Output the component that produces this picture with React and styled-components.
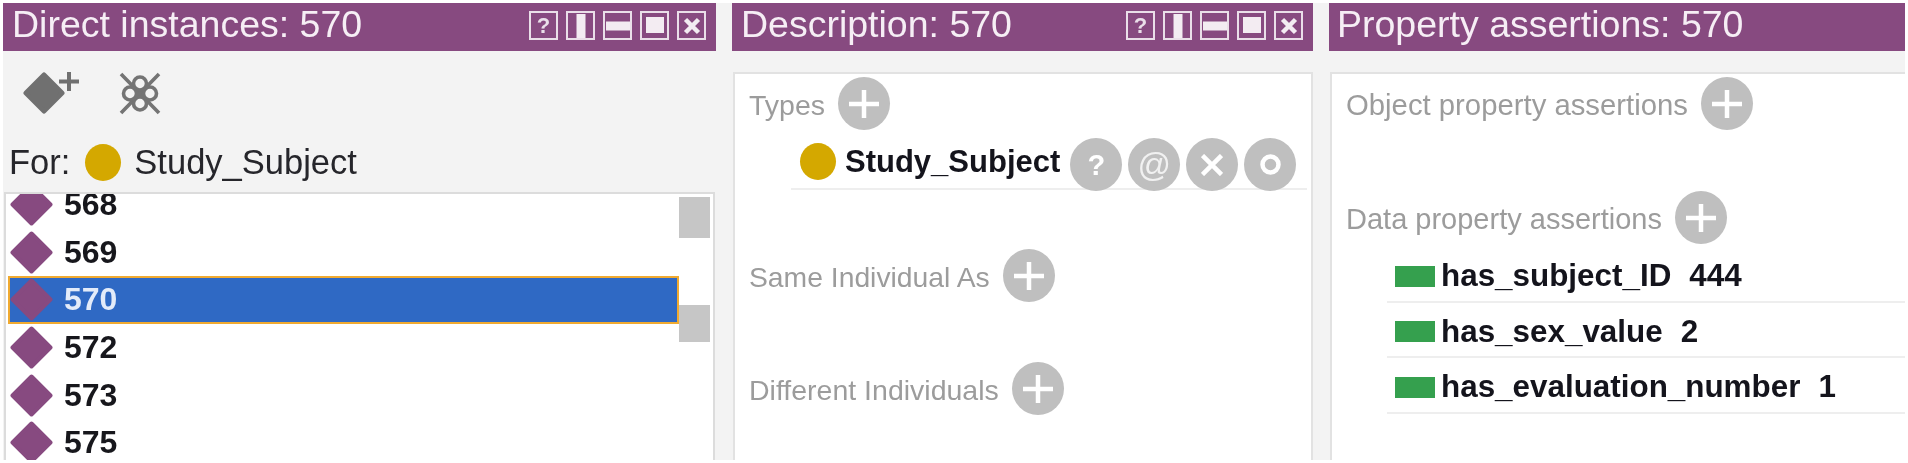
import React from "react";
import styled, { createGlobalStyle } from "styled-components";

const Global = createGlobalStyle`
  html, body { margin: 0; padding: 0; background: #fff; }
  #root { width: 1908px; height: 463px; overflow: hidden; }
`;

const Page = styled.div`
  box-sizing: border-box;
  width: 1908px;
  height: 463px;
  padding: 3px;
  background: #fff;
  font-family: "Liberation Sans", Arial, sans-serif;
  filter: blur(0.65px);
`;
const Frame = styled.div`
  display: flex;
  height: 457px;
  gap: 16px;
  background: #f3f3f3;
  overflow: hidden;
`;
const Panel = styled.section`
  display: flex;
  flex-direction: column;
  flex: 0 0 ${(p) => p.$w}px;
  min-width: 0;
`;
const Header = styled.header`
  display: flex;
  align-items: center;
  justify-content: space-between;
  box-sizing: border-box;
  flex: 0 0 48px;
  padding: 0 10px 0 ${(p) => p.$left}px;
  background: #874a80;
  color: #f6eef5;
`;
const Title = styled.h2`
  margin: 0 0 6px;
  font-size: 37.5px;
  font-weight: 400;
  line-height: 42px;
  white-space: nowrap;
`;
const WinButtons = styled.div`
  display: flex;
  gap: 8px;
  margin-bottom: 3px;
`;
const WinButton = styled.div`
  display: flex;
  align-items: center;
  justify-content: center;
  box-sizing: border-box;
  width: 29px;
  height: 29px;
  border: 2.5px solid #eadfe9;
  font-size: 22px;
  font-weight: 700;
  line-height: 1;
  color: #eadfe9;
`;
const Toolbar = styled.div`
  display: flex;
  align-items: flex-start;
  gap: 38px;
  box-sizing: border-box;
  height: 85px;
  padding: 21px 0 0 18px;
`;
const ForRow = styled.div`
  display: flex;
  align-items: center;
  box-sizing: border-box;
  height: 56px;
  padding: 0 0 4px 6px;
  font-size: 34.5px;
  color: #26262b;
`;
const ClassDot = styled.span`
  flex: none;
  width: 36px;
  height: 37px;
  margin: ${(p) => p.$margin};
  border-radius: 50%;
  background: #d4a800;
`;
const ListBox = styled.div`
  display: flex;
  flex: 1;
  min-height: 0;
  margin-left: 1px;
  margin-right: 1px;
  border: 2px solid #dcdcdc;
  border-bottom: 0;
  background: #fff;
  overflow: hidden;
`;
const Rows = styled.div`
  flex: 0 0 673px;
  margin-top: -13.5px;
`;
const IndividualRow = styled.div`
  display: flex;
  align-items: center;
  box-sizing: border-box;
  height: 47.7px;
  margin-left: 2px;
  padding-left: 2px;
  gap: 11px;
  font-size: 32px;
  font-weight: 700;
  color: ${(p) => (p.$selected ? "#e3ebf9" : "#17171c")};
  background: ${(p) => (p.$selected ? "#2f69c4" : "transparent")};
  outline: ${(p) => (p.$selected ? "2px solid #f0aa30" : "none")};
  outline-offset: -2px;
`;
const ScrollTrack = styled.div`
  display: flex;
  flex-direction: column;
  flex: 0 0 31px;
  padding-top: 3px;
`;
const Thumb = styled.div`
  flex: none;
  height: ${(p) => p.$h}px;
  margin-bottom: ${(p) => p.$after}px;
  background: #c6c6c6;
`;
const Card = styled.div`
  flex: 1;
  min-height: 0;
  box-sizing: border-box;
  margin: 21px 0 0 1px;
  padding-top: 3px;
  border: 2px solid #e2e2e2;
  border-right-width: ${(p) => (p.$open ? 0 : 2)}px;
  border-bottom: 0;
  background: #fff;
`;
const SectionHead = styled.div`
  display: flex;
  align-items: center;
  gap: 13px;
  height: 53px;
  margin-top: ${(p) => p.$top}px;
  padding-left: 14px;
  font-size: ${(p) => p.$size}px;
  color: #9c9c9c;
`;
const SectionLabel = styled.span`
  padding-top: 3px;
`;
const TypeRow = styled.div`
  display: flex;
  align-items: flex-start;
  box-sizing: border-box;
  height: 52px;
  margin: 8px 4px 0 56px;
  padding-left: 9px;
  border-bottom: 2px solid #eeeeee;
  font-size: 31px;
  font-weight: 700;
  line-height: 48px;
  color: #14141c;
`;
const Actions = styled.div`
  display: flex;
  gap: 6px;
  margin-left: 10px;
`;
const RoundButton = styled.div`
  display: flex;
  align-items: center;
  justify-content: center;
  flex: none;
  width: 52px;
  height: 53px;
  border-radius: 50%;
  background: #bfbfbf;
  color: ${(p) => p.$ink || "#fff"};
  font-size: ${(p) => p.$size || 30}px;
  font-weight: ${(p) => p.$weight || 400};
`;
const DataRows = styled.div`
  margin-top: 3px;
`;
const DataRow = styled.div`
  display: flex;
  align-items: center;
  box-sizing: border-box;
  height: 55.5px;
  margin-left: 55px;
  padding: 5px 0 0 8px;
  border-bottom: 2px solid #eeeeee;
  font-size: 31.4px;
  font-weight: 700;
  color: #14141c;
`;
const Swatch = styled.span`
  flex: none;
  width: 40px;
  height: 21px;
  margin-right: 6px;
  background: #35a04e;
`;
const DataValue = styled.span`
  margin-left: 18px;
`;

const Glyph = styled.svg`
  display: block;
  flex: none;
`;

const Diamond = () => (
  <Glyph width="43" height="43" viewBox="0 0 43 43">
    <polygon points="21.5,2.5 40.5,21.5 21.5,40.5 2.5,21.5" fill="#874a80" stroke="#874a80" strokeWidth="4" strokeLinejoin="round" />
  </Glyph>
);
const AddIndividual = () => (
  <Glyph width="60" height="42" viewBox="0 0 60 42">
    <polygon points="23,3 41,21 23,39 5,21" fill="#707070" stroke="#707070" strokeWidth="5" strokeLinejoin="round" />
    <path d="M38 9.5H58M48 0V19" stroke="#707070" strokeWidth="4" fill="none" />
  </Glyph>
);
const DeleteIndividual = () => (
  <Glyph width="42" height="43" viewBox="0 0 42 43">
    <g fill="none" stroke="#747474" strokeWidth="3.6">
      <path d="M2 2L40 41M40 2L2 41" />
      <circle cx="21" cy="11.5" r="6.5" />
      <circle cx="21" cy="31.5" r="6.5" />
      <circle cx="11" cy="21.5" r="6.5" />
      <circle cx="31" cy="21.5" r="6.5" />
    </g>
  </Glyph>
);
const Plus = () => (
  <Glyph width="30" height="28" viewBox="0 0 30 28">
    <path d="M0 14H30M15 0V28" stroke="#fff" strokeWidth="4.5" />
  </Glyph>
);
const Cross = () => (
  <Glyph width="22" height="22" viewBox="0 0 22 22">
    <path d="M1.5 1.5L20.5 20.5M20.5 1.5L1.5 20.5" stroke="#fff" strokeWidth="4.5" />
  </Glyph>
);
const Ring = () => (
  <Glyph width="21" height="21" viewBox="0 0 21 21">
    <circle cx="10.5" cy="10.5" r="8" fill="none" stroke="#fff" strokeWidth="4.5" />
  </Glyph>
);
const SplitV = () => (
  <Glyph width="24" height="24" viewBox="0 0 24 24">
    <rect x="7.5" y="0" width="9" height="24" fill="#f3ecf2" />
  </Glyph>
);
const SplitH = () => (
  <Glyph width="24" height="24" viewBox="0 0 24 24">
    <rect x="0" y="7.5" width="24" height="9" fill="#f3ecf2" />
  </Glyph>
);
const Maximize = () => (
  <Glyph width="24" height="24" viewBox="0 0 24 24">
    <rect x="3" y="3" width="18" height="16" fill="#f3ecf2" />
  </Glyph>
);
const Close = () => (
  <Glyph width="24" height="24" viewBox="0 0 24 24">
    <path d="M5.5 5.5L18.5 18.5M18.5 5.5L5.5 18.5" stroke="#f3ecf2" strokeWidth="4.5" />
  </Glyph>
);

const WindowControls = () => (
  <WinButtons>
    <WinButton>?</WinButton>
    <WinButton><SplitV /></WinButton>
    <WinButton><SplitH /></WinButton>
    <WinButton><Maximize /></WinButton>
    <WinButton><Close /></WinButton>
  </WinButtons>
);

const Section = ({ label, top = 0, size }) => (
  <SectionHead $top={top} $size={size}>
    <SectionLabel>{label}</SectionLabel>
    <RoundButton><Plus /></RoundButton>
  </SectionHead>
);

const individuals = ["568", "569", "570", "572", "573", "575"];
const dataProps = [
  ["has_subject_ID", "444"],
  ["has_sex_value", "2"],
  ["has_evaluation_number", "1"],
];

export default function App() {
  return (
    <>
      <Global />
      <Page>
        <Frame>
          <Panel $w={713}>
            <Header $left={9}>
              <Title>Direct instances: 570</Title>
              <WindowControls />
            </Header>
            <Toolbar>
              <AddIndividual />
              <DeleteIndividual />
            </Toolbar>
            <ForRow>
              For:
              <ClassDot $margin="0 13px 0 15px" />
              Study_Subject
            </ForRow>
            <ListBox>
              <Rows>
                {individuals.map((n) => (
                  <IndividualRow key={n} $selected={n === "570"}>
                    <Diamond />
                    {n}
                  </IndividualRow>
                ))}
              </Rows>
              <ScrollTrack>
                <Thumb $h={41} $after={67} />
                <Thumb $h={37} $after={0} />
              </ScrollTrack>
            </ListBox>
          </Panel>

          <Panel $w={581}>
            <Header $left={9}>
              <Title>Description: 570</Title>
              <WindowControls />
            </Header>
            <Card>
              <Section label="Types" size={28.5} />
              <TypeRow>
                <ClassDot $margin="5px 9px 0 0" />
                Study_Subject
                <Actions>
                  <RoundButton $size={29} $weight={700}>?</RoundButton>
                  <RoundButton $size={33} $ink="#f1f1f1">@</RoundButton>
                  <RoundButton><Cross /></RoundButton>
                  <RoundButton><Ring /></RoundButton>
                </Actions>
              </TypeRow>
              <Section label="Same Individual As" top={59} size={28.3} />
              <Section label="Different Individuals" top={60} size={28.5} />
            </Card>
          </Panel>

          <Panel $w={576}>
            <Header $left={8}>
              <Title>Property assertions: 570</Title>
            </Header>
            <Card $open>
              <Section label="Object property assertions" size={29.3} />
              <Section label="Data property assertions" top={61} size={29} />
              <DataRows>
                {dataProps.map(([name, value]) => (
                  <DataRow key={name}>
                    <Swatch />
                    {name}
                    <DataValue>{value}</DataValue>
                  </DataRow>
                ))}
              </DataRows>
            </Card>
          </Panel>
        </Frame>
      </Page>
    </>
  );
}
